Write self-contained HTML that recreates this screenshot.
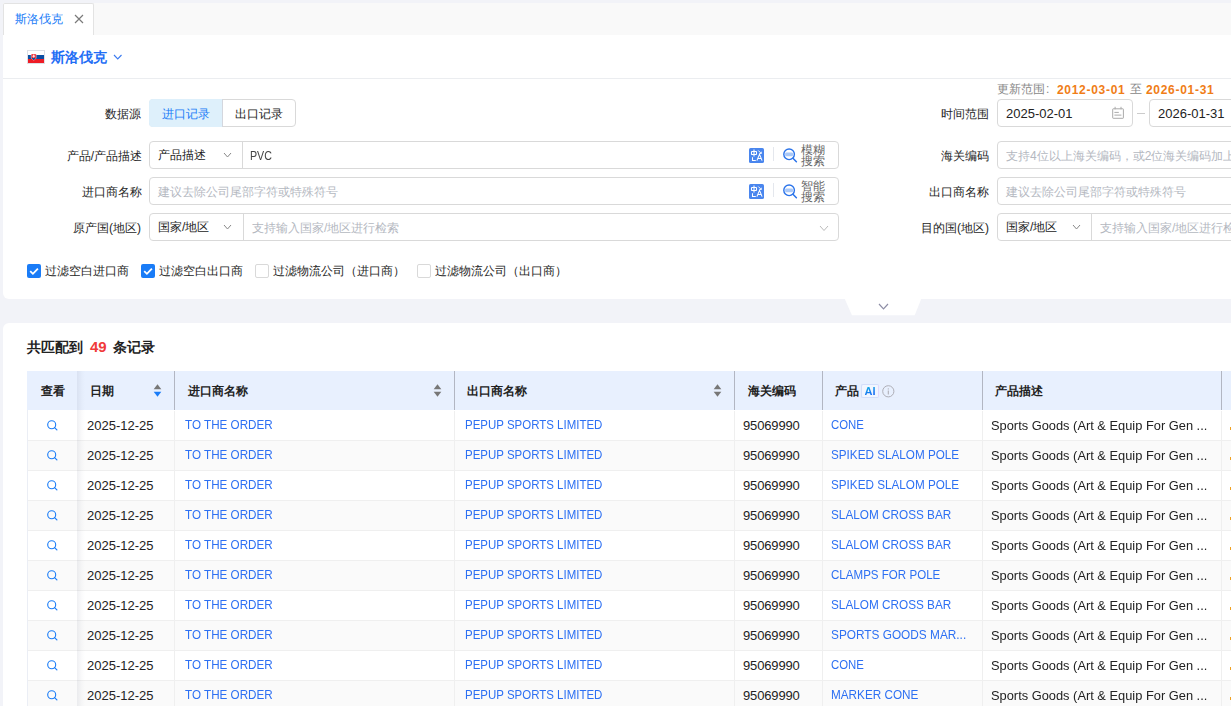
<!DOCTYPE html>
<html><head><meta charset="utf-8"><style>
*{box-sizing:border-box;margin:0;padding:0}
html,body{width:1231px;height:706px;overflow:hidden}
body{background:#f2f3f8;font-family:"Liberation Sans",sans-serif;color:#333;position:relative;font-size:12px}
.abs{position:absolute}
.tabbar{position:absolute;left:3px;top:3px;width:1228px;height:32px;background:#f9f9f9}
.tab{position:absolute;left:3px;top:3px;width:91px;height:33px;background:#fff;border:1px solid #e3e3e3;border-bottom:none;border-radius:2px 2px 0 0}
.tab .tx{position:absolute;left:11px;top:7px;font-size:12px;line-height:16px;color:#1a7cf7}
.card{position:absolute;left:3px;background:#fff;width:1240px}
.c1{top:35px;height:264px;border-radius:0 0 6px 6px}
.c2{top:323px;height:400px;border-radius:6px 6px 0 0}
.hdrline{position:absolute;left:3px;top:78px;width:1228px;height:1px;background:#ebedf0}
.lbl{position:absolute;font-size:12px;line-height:16px;color:#262626;text-align:right;white-space:nowrap}
.box{position:absolute;height:28px;border:1px solid #d9d9d9;border-radius:4px;background:#fff}
.ph{position:absolute;font-size:12px;line-height:16px;color:#b4b8bf;white-space:nowrap}
.val{position:absolute;font-size:12px;line-height:16px;color:#222;white-space:nowrap}
.chev{position:absolute}
.cb{position:absolute;width:14px;height:14px;border-radius:2px}
.cb.on{background:#1a7cf7}
.cb.off{border:1px solid #d9d9d9;background:#fff}
.cbt{position:absolute;top:263px;font-size:12px;line-height:16px;color:#262626;white-space:nowrap}
.thead{position:absolute;left:27px;top:371px;width:1220px;height:39px;background:#e8f0fe}
.th{position:absolute;top:0;height:39px;font-size:12px;font-weight:bold;line-height:40px;color:#222;white-space:nowrap}
.vb{position:absolute;top:0;width:1px;height:39px;background:#b2b6c2}
.tr{position:absolute;left:27px;width:1220px;height:30px;background:#fff;border-bottom:1px solid #efefef}
.tr.alt{background:#fafafa}
.td{position:absolute;top:0;height:29px;line-height:29px;font-size:13px;white-space:nowrap;color:#222}
.lk{color:#2d70f3;top:-1px}
.up{display:inline-block;transform-origin:0 50%}
.c0{position:absolute;left:0;top:0;width:50px;height:29px;display:flex;align-items:center;justify-content:center}
.vl{position:absolute;top:0;width:1px;height:29px;background:#efefef}
</style></head><body>
<div class="tabbar"></div>
<div class="tab"><span class="tx">斯洛伐克</span><svg class="abs" style="left:70px;top:10px" width="11" height="11" viewBox="0 0 11 11"><path d="M1 1L9 9M9 1L1 9" stroke="#7a7a7a" stroke-width="1.15"/></svg></div>
<div class="card c1"></div>
<div class="card c2"></div>
<svg class="abs" style="left:27px;top:50px" width="18" height="14" viewBox="0 0 18 14">
<rect x="0.5" y="0.5" width="17" height="13" fill="none" stroke="#dde0e6"/><rect x="1" y="1" width="16" height="4" fill="#fff"/><rect x="1" y="5" width="16" height="4" fill="#0b4ea2"/><rect x="1" y="9" width="16" height="4" fill="#ee1c25"/>
<path d="M4.2 3.9H9.2V7.4C9.2 8.7 8 9.5 6.7 10.2C5.4 9.5 4.2 8.7 4.2 7.4Z" fill="#ee1c25" stroke="#fff" stroke-width="0.45"/><path d="M6.7 4.6V8.2M5.7 5.6H7.7M5.3 6.6H8.1" stroke="#fff" stroke-width="0.7"/><path d="M4.8 8.3Q6.7 7.3 8.6 8.3Q8 9.4 6.7 9.9Q5.4 9.4 4.8 8.3Z" fill="#0b4ea2"/>
</svg>
<div class="abs" style="left:51px;top:48px;font-size:14px;line-height:18px;font-weight:bold;color:#1f6ef5">斯洛伐克</div>
<svg class="chev" style="left:113px;top:54px" width="9.5" height="6" viewBox="-1 -1 9.5 6"><path d="M0 0L3.75 4L7.5 0" fill="none" stroke="#3a7af0" stroke-width="1.1"/></svg>
<div class="hdrline"></div>
<div class="lbl" style="right:1090px;top:106px">数据源</div>
<div class="box" style="left:149px;top:99px;width:147px;"></div>
<div class="abs" style="left:149px;top:99px;width:73px;height:28px;background:#def0fb;border-radius:4px 0 0 4px"></div>
<div class="abs" style="left:222px;top:99px;width:1px;height:28px;background:#d4d7de"></div>
<div class="val" style="left:162px;top:106px;color:#1a7cf7">进口记录</div>
<div class="val" style="left:235px;top:106px">出口记录</div>
<div class="lbl" style="right:1089px;top:148px">产品/产品描述</div>
<div class="box" style="left:149px;top:141px;width:690px"></div>
<div class="abs" style="left:242px;top:141px;width:1px;height:28px;background:#d9d9d9"></div>
<div class="val" style="left:158px;top:147px">产品描述</div>
<svg class="chev" style="left:223px;top:152px" width="9" height="6" viewBox="-1 -1 9 6"><path d="M0 0L3.5 4L7 0" fill="none" stroke="#888" stroke-width="1"/></svg>
<div class="val" style="left:250px;top:148px;color:#444;transform:scaleX(0.89);transform-origin:0 50%">PVC</div>
<svg class="abs" style="left:749px;top:148px" width="15" height="15" viewBox="0 0 15 15"><rect width="15" height="15" rx="1.6" fill="#4a86ee"/>
<g fill="none" stroke="#fff" stroke-width="1.05"><rect x="2.5" y="3.5" width="5" height="3" rx="0.5"/><path d="M5 1.6V8.6"/><path d="M3.5 9.2V12.5H6.8"/><path d="M7.9 12.6L10.5 6.4L13.1 12.6M9 10.5H12"/><path d="M9.3 2.5L12.2 5.4M12.3 3.7V5.5H10.5" stroke-width="0.9"/></g></svg>
<div class="abs" style="left:773px;top:147px;width:1px;height:14px;background:#e4e7ed"></div>
<svg class="abs" style="left:783px;top:148px" width="15" height="15" viewBox="0 0 15 15"><rect x="2.1" y="4.4" width="7.9" height="3.9" rx="1.2" fill="#a9c8f8"/><circle cx="6.1" cy="6.3" r="5.3" fill="none" stroke="#2a73ea" stroke-width="1.4"/><path d="M10.2 10.4L13.4 13.7" stroke="#2a73ea" stroke-width="1.5" stroke-linecap="round"/></svg>
<div class="abs" style="left:801px;top:145px;font-size:12px;line-height:11px;color:#666">模糊<br>搜索</div>
<div class="lbl" style="right:1089px;top:184px">进口商名称</div>
<div class="box" style="left:149px;top:177px;width:690px"></div>
<div class="ph" style="left:158px;top:184px">建议去除公司尾部字符或特殊符号</div>
<svg class="abs" style="left:749px;top:184px" width="15" height="15" viewBox="0 0 15 15"><rect width="15" height="15" rx="1.6" fill="#4a86ee"/>
<g fill="none" stroke="#fff" stroke-width="1.05"><rect x="2.5" y="3.5" width="5" height="3" rx="0.5"/><path d="M5 1.6V8.6"/><path d="M3.5 9.2V12.5H6.8"/><path d="M7.9 12.6L10.5 6.4L13.1 12.6M9 10.5H12"/><path d="M9.3 2.5L12.2 5.4M12.3 3.7V5.5H10.5" stroke-width="0.9"/></g></svg>
<div class="abs" style="left:773px;top:183px;width:1px;height:14px;background:#e4e7ed"></div>
<svg class="abs" style="left:783px;top:184px" width="15" height="15" viewBox="0 0 15 15"><rect x="2.1" y="4.4" width="7.9" height="3.9" rx="1.2" fill="#a9c8f8"/><circle cx="6.1" cy="6.3" r="5.3" fill="none" stroke="#2a73ea" stroke-width="1.4"/><path d="M10.2 10.4L13.4 13.7" stroke="#2a73ea" stroke-width="1.5" stroke-linecap="round"/></svg>
<div class="abs" style="left:801px;top:181px;font-size:12px;line-height:11px;color:#666">智能<br>搜索</div>
<div class="lbl" style="right:1090px;top:220px">原产国(地区)</div>
<div class="box" style="left:149px;top:213px;width:690px"></div>
<div class="abs" style="left:243px;top:213px;width:1px;height:28px;background:#d9d9d9"></div>
<div class="val" style="left:158px;top:219px">国家/地区</div>
<svg class="chev" style="left:223px;top:224px" width="9" height="6" viewBox="-1 -1 9 6"><path d="M0 0L3.5 4L7 0" fill="none" stroke="#888" stroke-width="1"/></svg>
<div class="ph" style="left:252px;top:220px">支持输入国家/地区进行检索</div>
<svg class="chev" style="left:819px;top:225px" width="10" height="6.5" viewBox="-1 -1 10 6.5"><path d="M0 0L4.0 4.5L8 0" fill="none" stroke="#bbb" stroke-width="1"/></svg>
<div class="cb on" style="left:27px;top:264px"></div><svg class="abs" style="left:27px;top:264px" width="14" height="14" viewBox="0 0 14 14"><path d="M3.2 7.2L5.9 9.8L10.9 4.6" fill="none" stroke="#fff" stroke-width="1.8"/></svg>
<div class="cbt" style="left:45px">过滤空白进口商</div>
<div class="cb on" style="left:141px;top:264px"></div><svg class="abs" style="left:141px;top:264px" width="14" height="14" viewBox="0 0 14 14"><path d="M3.2 7.2L5.9 9.8L10.9 4.6" fill="none" stroke="#fff" stroke-width="1.8"/></svg>
<div class="cbt" style="left:159px">过滤空白出口商</div>
<div class="cb off" style="left:255px;top:264px"></div>
<div class="cbt" style="left:273px">过滤物流公司（进口商）</div>
<div class="cb off" style="left:417px;top:264px"></div>
<div class="cbt" style="left:435px">过滤物流公司（出口商）</div>
<svg class="abs" style="left:844px;top:299px" width="78" height="17" viewBox="0 0 78 17"><path d="M0.8 0H77.2L70.7 16.2H7.9z" fill="#fff"/></svg>
<svg class="chev" style="left:878px;top:303.3px" width="11" height="6.8" viewBox="-1 -1 11 6.8"><path d="M0 0L4.5 4.8L9 0" fill="none" stroke="#8e8ea6" stroke-width="1.2"/></svg>
<div class="abs" style="left:997px;top:81px;font-size:12px;line-height:16px;color:#888;white-space:nowrap">更新范围<span style="position:relative;left:1px">:</span></div>
<div class="abs" style="left:1057px;top:82px;font-size:12px;line-height:16px;color:#f07d17;font-weight:bold;letter-spacing:0.7px;white-space:nowrap">2012-03-01</div>
<div class="abs" style="left:1130px;top:81px;font-size:12px;line-height:16px;color:#888;white-space:nowrap">至</div>
<div class="abs" style="left:1146px;top:82px;font-size:12px;line-height:16px;color:#f07d17;font-weight:bold;letter-spacing:0.7px;white-space:nowrap">2026-01-31</div>
<div class="lbl" style="right:242px;top:106px">时间范围</div>
<div class="box" style="left:997px;top:99px;width:136px"></div>
<div class="val" style="left:1006px;top:106px;font-size:13px;color:#222">2025-02-01</div>
<svg class="abs" style="left:1111px;top:106px" width="14" height="14" viewBox="0 0 14 14"><rect x="1.7" y="2.8" width="10.7" height="9.5" rx="0.5" fill="none" stroke="#aaa" stroke-width="1"/><path d="M4.1 0.8v2.5M10 0.8v2.5M3.4 6.4h4.4M3.4 9.1h7" stroke="#aaa" stroke-width="1"/></svg>
<div class="abs" style="left:1137px;top:113px;width:8px;height:1px;background:#ccc"></div>
<div class="box" style="left:1149px;top:99px;width:136px"></div>
<div class="val" style="left:1158px;top:106px;font-size:13px;color:#222">2026-01-31</div>
<div class="lbl" style="right:242px;top:148px">海关编码</div>
<div class="box" style="left:997px;top:141px;width:300px"></div>
<div class="ph" style="left:1006px;top:148px">支持4位以上海关编码，或2位海关编码加上产品描述</div>
<div class="lbl" style="right:242px;top:184px">出口商名称</div>
<div class="box" style="left:997px;top:177px;width:300px"></div>
<div class="ph" style="left:1006px;top:184px">建议去除公司尾部字符或特殊符号</div>
<div class="lbl" style="right:242px;top:220px">目的国(地区)</div>
<div class="box" style="left:997px;top:213px;width:300px"></div>
<div class="abs" style="left:1091px;top:213px;width:1px;height:28px;background:#d9d9d9"></div>
<div class="val" style="left:1006px;top:219px">国家/地区</div>
<svg class="chev" style="left:1072px;top:224px" width="9" height="6" viewBox="-1 -1 9 6"><path d="M0 0L3.5 4L7 0" fill="none" stroke="#888" stroke-width="1"/></svg>
<div class="ph" style="left:1100px;top:220px">支持输入国家/地区进行检索</div>
<div class="abs" style="left:27px;top:338px;font-size:13.7px;line-height:18px;font-weight:bold;color:#222;white-space:nowrap">共匹配到<span style="color:#f03a3a;font-size:15px;margin:0 6px 0 7px">49</span>条记录</div>
<div class="thead"><div class="th" style="left:14px">查看</div><div class="th" style="left:63px">日期</div><div class="vb" style="left:147px"></div><div class="th" style="left:161px">进口商名称</div><div class="vb" style="left:427px"></div><div class="th" style="left:440px">出口商名称</div><div class="vb" style="left:707px"></div><div class="th" style="left:721px">海关编码</div><div class="vb" style="left:795px"></div><div class="th" style="left:808px">产品</div><div class="abs" style="left:834px;top:13px;width:18px;height:14px;background:#f1f6ff;border:1px solid #d3defa;border-right-color:#e2d8fb;border-radius:2px;font-size:11px;line-height:12px;font-weight:bold;text-align:center"><span style="background:linear-gradient(160deg,#16c4dc,#1478f0 60%,#0a4ff5);-webkit-background-clip:text;background-clip:text;color:transparent">AI</span></div><svg class="abs" style="left:855px;top:14px" width="13" height="13" viewBox="0 0 13 13"><circle cx="6.3" cy="6.3" r="5.6" fill="none" stroke="#aeaeb6" stroke-width="1"/><path d="M6.3 5.6v3.9" stroke="#aeaeb6" stroke-width="1.1"/><circle cx="6.3" cy="3.9" r="0.65" fill="#aeaeb6"/></svg><div class="vb" style="left:955px"></div><div class="th" style="left:968px">产品描述</div><div class="vb" style="left:1194px"></div></div>
<svg class="abs" style="left:153px;top:384px" width="9" height="13" viewBox="0 0 9 13"><path d="M4.5 0.3L8.3 5.3H0.7z" fill="#777"/><path d="M4.5 12.7L8.3 7.7H0.7z" fill="#1a7cf7"/></svg>
<svg class="abs" style="left:433px;top:384px" width="9" height="13" viewBox="0 0 9 13"><path d="M4.5 0.3L8.3 5.3H0.7z" fill="#777"/><path d="M4.5 12.7L8.3 7.7H0.7z" fill="#777"/></svg>
<svg class="abs" style="left:713px;top:384px" width="9" height="13" viewBox="0 0 9 13"><path d="M4.5 0.3L8.3 5.3H0.7z" fill="#777"/><path d="M4.5 12.7L8.3 7.7H0.7z" fill="#777"/></svg>
<div class="tr" style="top:411px">
<div class="c0"><svg width="11" height="11" viewBox="0 0 11 11"><circle cx="4.7" cy="4.7" r="4" fill="none" stroke="#1a7cf7" stroke-width="1.1"/><path d="M7.6 7.6L9.9 9.9" stroke="#1a7cf7" stroke-width="1.2" stroke-linecap="round"/></svg></div>
<div class="td" style="left:60px">2025-12-25</div>
<div class="vl" style="left:147px"></div>
<div class="td lk" style="left:158px"><span class="up" style="transform:scaleX(0.897)">TO THE ORDER</span></div>
<div class="vl" style="left:427px"></div>
<div class="td lk" style="left:438px"><span class="up" style="transform:scaleX(0.883)">PEPUP SPORTS LIMITED</span></div>
<div class="vl" style="left:707px"></div>
<div class="td" style="left:716px;letter-spacing:-0.15px">95069990</div>
<div class="vl" style="left:795px"></div>
<div class="td lk" style="left:804px"><span class="up" style="transform:scaleX(0.875)">CONE</span></div>
<div class="vl" style="left:955px"></div>
<div class="td" style="left:964px"><span class="up" style="transform:scaleX(0.988)">Sports Goods (Art &amp; Equip For Gen ...</span></div>
<div class="vl" style="left:1194px"></div>
</div>
<div class="tr alt" style="top:441px">
<div class="c0"><svg width="11" height="11" viewBox="0 0 11 11"><circle cx="4.7" cy="4.7" r="4" fill="none" stroke="#1a7cf7" stroke-width="1.1"/><path d="M7.6 7.6L9.9 9.9" stroke="#1a7cf7" stroke-width="1.2" stroke-linecap="round"/></svg></div>
<div class="td" style="left:60px">2025-12-25</div>
<div class="vl" style="left:147px"></div>
<div class="td lk" style="left:158px"><span class="up" style="transform:scaleX(0.897)">TO THE ORDER</span></div>
<div class="vl" style="left:427px"></div>
<div class="td lk" style="left:438px"><span class="up" style="transform:scaleX(0.883)">PEPUP SPORTS LIMITED</span></div>
<div class="vl" style="left:707px"></div>
<div class="td" style="left:716px;letter-spacing:-0.15px">95069990</div>
<div class="vl" style="left:795px"></div>
<div class="td lk" style="left:804px"><span class="up" style="transform:scaleX(0.9)">SPIKED SLALOM POLE</span></div>
<div class="vl" style="left:955px"></div>
<div class="td" style="left:964px"><span class="up" style="transform:scaleX(0.988)">Sports Goods (Art &amp; Equip For Gen ...</span></div>
<div class="vl" style="left:1194px"></div>
</div>
<div class="tr" style="top:471px">
<div class="c0"><svg width="11" height="11" viewBox="0 0 11 11"><circle cx="4.7" cy="4.7" r="4" fill="none" stroke="#1a7cf7" stroke-width="1.1"/><path d="M7.6 7.6L9.9 9.9" stroke="#1a7cf7" stroke-width="1.2" stroke-linecap="round"/></svg></div>
<div class="td" style="left:60px">2025-12-25</div>
<div class="vl" style="left:147px"></div>
<div class="td lk" style="left:158px"><span class="up" style="transform:scaleX(0.897)">TO THE ORDER</span></div>
<div class="vl" style="left:427px"></div>
<div class="td lk" style="left:438px"><span class="up" style="transform:scaleX(0.883)">PEPUP SPORTS LIMITED</span></div>
<div class="vl" style="left:707px"></div>
<div class="td" style="left:716px;letter-spacing:-0.15px">95069990</div>
<div class="vl" style="left:795px"></div>
<div class="td lk" style="left:804px"><span class="up" style="transform:scaleX(0.9)">SPIKED SLALOM POLE</span></div>
<div class="vl" style="left:955px"></div>
<div class="td" style="left:964px"><span class="up" style="transform:scaleX(0.988)">Sports Goods (Art &amp; Equip For Gen ...</span></div>
<div class="vl" style="left:1194px"></div>
</div>
<div class="tr alt" style="top:501px">
<div class="c0"><svg width="11" height="11" viewBox="0 0 11 11"><circle cx="4.7" cy="4.7" r="4" fill="none" stroke="#1a7cf7" stroke-width="1.1"/><path d="M7.6 7.6L9.9 9.9" stroke="#1a7cf7" stroke-width="1.2" stroke-linecap="round"/></svg></div>
<div class="td" style="left:60px">2025-12-25</div>
<div class="vl" style="left:147px"></div>
<div class="td lk" style="left:158px"><span class="up" style="transform:scaleX(0.897)">TO THE ORDER</span></div>
<div class="vl" style="left:427px"></div>
<div class="td lk" style="left:438px"><span class="up" style="transform:scaleX(0.883)">PEPUP SPORTS LIMITED</span></div>
<div class="vl" style="left:707px"></div>
<div class="td" style="left:716px;letter-spacing:-0.15px">95069990</div>
<div class="vl" style="left:795px"></div>
<div class="td lk" style="left:804px"><span class="up" style="transform:scaleX(0.905)">SLALOM CROSS BAR</span></div>
<div class="vl" style="left:955px"></div>
<div class="td" style="left:964px"><span class="up" style="transform:scaleX(0.988)">Sports Goods (Art &amp; Equip For Gen ...</span></div>
<div class="vl" style="left:1194px"></div>
</div>
<div class="tr" style="top:531px">
<div class="c0"><svg width="11" height="11" viewBox="0 0 11 11"><circle cx="4.7" cy="4.7" r="4" fill="none" stroke="#1a7cf7" stroke-width="1.1"/><path d="M7.6 7.6L9.9 9.9" stroke="#1a7cf7" stroke-width="1.2" stroke-linecap="round"/></svg></div>
<div class="td" style="left:60px">2025-12-25</div>
<div class="vl" style="left:147px"></div>
<div class="td lk" style="left:158px"><span class="up" style="transform:scaleX(0.897)">TO THE ORDER</span></div>
<div class="vl" style="left:427px"></div>
<div class="td lk" style="left:438px"><span class="up" style="transform:scaleX(0.883)">PEPUP SPORTS LIMITED</span></div>
<div class="vl" style="left:707px"></div>
<div class="td" style="left:716px;letter-spacing:-0.15px">95069990</div>
<div class="vl" style="left:795px"></div>
<div class="td lk" style="left:804px"><span class="up" style="transform:scaleX(0.905)">SLALOM CROSS BAR</span></div>
<div class="vl" style="left:955px"></div>
<div class="td" style="left:964px"><span class="up" style="transform:scaleX(0.988)">Sports Goods (Art &amp; Equip For Gen ...</span></div>
<div class="vl" style="left:1194px"></div>
</div>
<div class="tr alt" style="top:561px">
<div class="c0"><svg width="11" height="11" viewBox="0 0 11 11"><circle cx="4.7" cy="4.7" r="4" fill="none" stroke="#1a7cf7" stroke-width="1.1"/><path d="M7.6 7.6L9.9 9.9" stroke="#1a7cf7" stroke-width="1.2" stroke-linecap="round"/></svg></div>
<div class="td" style="left:60px">2025-12-25</div>
<div class="vl" style="left:147px"></div>
<div class="td lk" style="left:158px"><span class="up" style="transform:scaleX(0.897)">TO THE ORDER</span></div>
<div class="vl" style="left:427px"></div>
<div class="td lk" style="left:438px"><span class="up" style="transform:scaleX(0.883)">PEPUP SPORTS LIMITED</span></div>
<div class="vl" style="left:707px"></div>
<div class="td" style="left:716px;letter-spacing:-0.15px">95069990</div>
<div class="vl" style="left:795px"></div>
<div class="td lk" style="left:804px"><span class="up" style="transform:scaleX(0.89)">CLAMPS FOR POLE</span></div>
<div class="vl" style="left:955px"></div>
<div class="td" style="left:964px"><span class="up" style="transform:scaleX(0.988)">Sports Goods (Art &amp; Equip For Gen ...</span></div>
<div class="vl" style="left:1194px"></div>
</div>
<div class="tr" style="top:591px">
<div class="c0"><svg width="11" height="11" viewBox="0 0 11 11"><circle cx="4.7" cy="4.7" r="4" fill="none" stroke="#1a7cf7" stroke-width="1.1"/><path d="M7.6 7.6L9.9 9.9" stroke="#1a7cf7" stroke-width="1.2" stroke-linecap="round"/></svg></div>
<div class="td" style="left:60px">2025-12-25</div>
<div class="vl" style="left:147px"></div>
<div class="td lk" style="left:158px"><span class="up" style="transform:scaleX(0.897)">TO THE ORDER</span></div>
<div class="vl" style="left:427px"></div>
<div class="td lk" style="left:438px"><span class="up" style="transform:scaleX(0.883)">PEPUP SPORTS LIMITED</span></div>
<div class="vl" style="left:707px"></div>
<div class="td" style="left:716px;letter-spacing:-0.15px">95069990</div>
<div class="vl" style="left:795px"></div>
<div class="td lk" style="left:804px"><span class="up" style="transform:scaleX(0.905)">SLALOM CROSS BAR</span></div>
<div class="vl" style="left:955px"></div>
<div class="td" style="left:964px"><span class="up" style="transform:scaleX(0.988)">Sports Goods (Art &amp; Equip For Gen ...</span></div>
<div class="vl" style="left:1194px"></div>
</div>
<div class="tr alt" style="top:621px">
<div class="c0"><svg width="11" height="11" viewBox="0 0 11 11"><circle cx="4.7" cy="4.7" r="4" fill="none" stroke="#1a7cf7" stroke-width="1.1"/><path d="M7.6 7.6L9.9 9.9" stroke="#1a7cf7" stroke-width="1.2" stroke-linecap="round"/></svg></div>
<div class="td" style="left:60px">2025-12-25</div>
<div class="vl" style="left:147px"></div>
<div class="td lk" style="left:158px"><span class="up" style="transform:scaleX(0.897)">TO THE ORDER</span></div>
<div class="vl" style="left:427px"></div>
<div class="td lk" style="left:438px"><span class="up" style="transform:scaleX(0.883)">PEPUP SPORTS LIMITED</span></div>
<div class="vl" style="left:707px"></div>
<div class="td" style="left:716px;letter-spacing:-0.15px">95069990</div>
<div class="vl" style="left:795px"></div>
<div class="td lk" style="left:804px"><span class="up" style="transform:scaleX(0.91)">SPORTS GOODS MAR...</span></div>
<div class="vl" style="left:955px"></div>
<div class="td" style="left:964px"><span class="up" style="transform:scaleX(0.988)">Sports Goods (Art &amp; Equip For Gen ...</span></div>
<div class="vl" style="left:1194px"></div>
</div>
<div class="tr" style="top:651px">
<div class="c0"><svg width="11" height="11" viewBox="0 0 11 11"><circle cx="4.7" cy="4.7" r="4" fill="none" stroke="#1a7cf7" stroke-width="1.1"/><path d="M7.6 7.6L9.9 9.9" stroke="#1a7cf7" stroke-width="1.2" stroke-linecap="round"/></svg></div>
<div class="td" style="left:60px">2025-12-25</div>
<div class="vl" style="left:147px"></div>
<div class="td lk" style="left:158px"><span class="up" style="transform:scaleX(0.897)">TO THE ORDER</span></div>
<div class="vl" style="left:427px"></div>
<div class="td lk" style="left:438px"><span class="up" style="transform:scaleX(0.883)">PEPUP SPORTS LIMITED</span></div>
<div class="vl" style="left:707px"></div>
<div class="td" style="left:716px;letter-spacing:-0.15px">95069990</div>
<div class="vl" style="left:795px"></div>
<div class="td lk" style="left:804px"><span class="up" style="transform:scaleX(0.875)">CONE</span></div>
<div class="vl" style="left:955px"></div>
<div class="td" style="left:964px"><span class="up" style="transform:scaleX(0.988)">Sports Goods (Art &amp; Equip For Gen ...</span></div>
<div class="vl" style="left:1194px"></div>
</div>
<div class="tr alt" style="top:681px">
<div class="c0"><svg width="11" height="11" viewBox="0 0 11 11"><circle cx="4.7" cy="4.7" r="4" fill="none" stroke="#1a7cf7" stroke-width="1.1"/><path d="M7.6 7.6L9.9 9.9" stroke="#1a7cf7" stroke-width="1.2" stroke-linecap="round"/></svg></div>
<div class="td" style="left:60px">2025-12-25</div>
<div class="vl" style="left:147px"></div>
<div class="td lk" style="left:158px"><span class="up" style="transform:scaleX(0.897)">TO THE ORDER</span></div>
<div class="vl" style="left:427px"></div>
<div class="td lk" style="left:438px"><span class="up" style="transform:scaleX(0.883)">PEPUP SPORTS LIMITED</span></div>
<div class="vl" style="left:707px"></div>
<div class="td" style="left:716px;letter-spacing:-0.15px">95069990</div>
<div class="vl" style="left:795px"></div>
<div class="td lk" style="left:804px"><span class="up" style="transform:scaleX(0.903)">MARKER CONE</span></div>
<div class="vl" style="left:955px"></div>
<div class="td" style="left:964px"><span class="up" style="transform:scaleX(0.988)">Sports Goods (Art &amp; Equip For Gen ...</span></div>
<div class="vl" style="left:1194px"></div>
</div>
<div class="abs" style="left:27px;top:410px;width:1px;height:300px;background:#ebeef5"></div>
<div class="abs" style="left:77px;top:371px;width:8px;height:340px;background:linear-gradient(to right,rgba(30,40,80,0.07),rgba(30,40,80,0.02) 60%,rgba(30,40,80,0))"></div>
<div class="abs" style="left:1230px;top:427px;width:1px;height:3px;background:#f0a020"></div>
<div class="abs" style="left:1230px;top:457px;width:1px;height:3px;background:#f0a020"></div>
<div class="abs" style="left:1230px;top:487px;width:1px;height:3px;background:#f0a020"></div>
<div class="abs" style="left:1230px;top:517px;width:1px;height:3px;background:#f0a020"></div>
<div class="abs" style="left:1230px;top:547px;width:1px;height:3px;background:#f0a020"></div>
<div class="abs" style="left:1230px;top:577px;width:1px;height:3px;background:#f0a020"></div>
<div class="abs" style="left:1230px;top:607px;width:1px;height:3px;background:#f0a020"></div>
<div class="abs" style="left:1230px;top:637px;width:1px;height:3px;background:#f0a020"></div>
<div class="abs" style="left:1230px;top:667px;width:1px;height:3px;background:#f0a020"></div>
<div class="abs" style="left:1230px;top:697px;width:1px;height:3px;background:#f0a020"></div>
</body></html>
